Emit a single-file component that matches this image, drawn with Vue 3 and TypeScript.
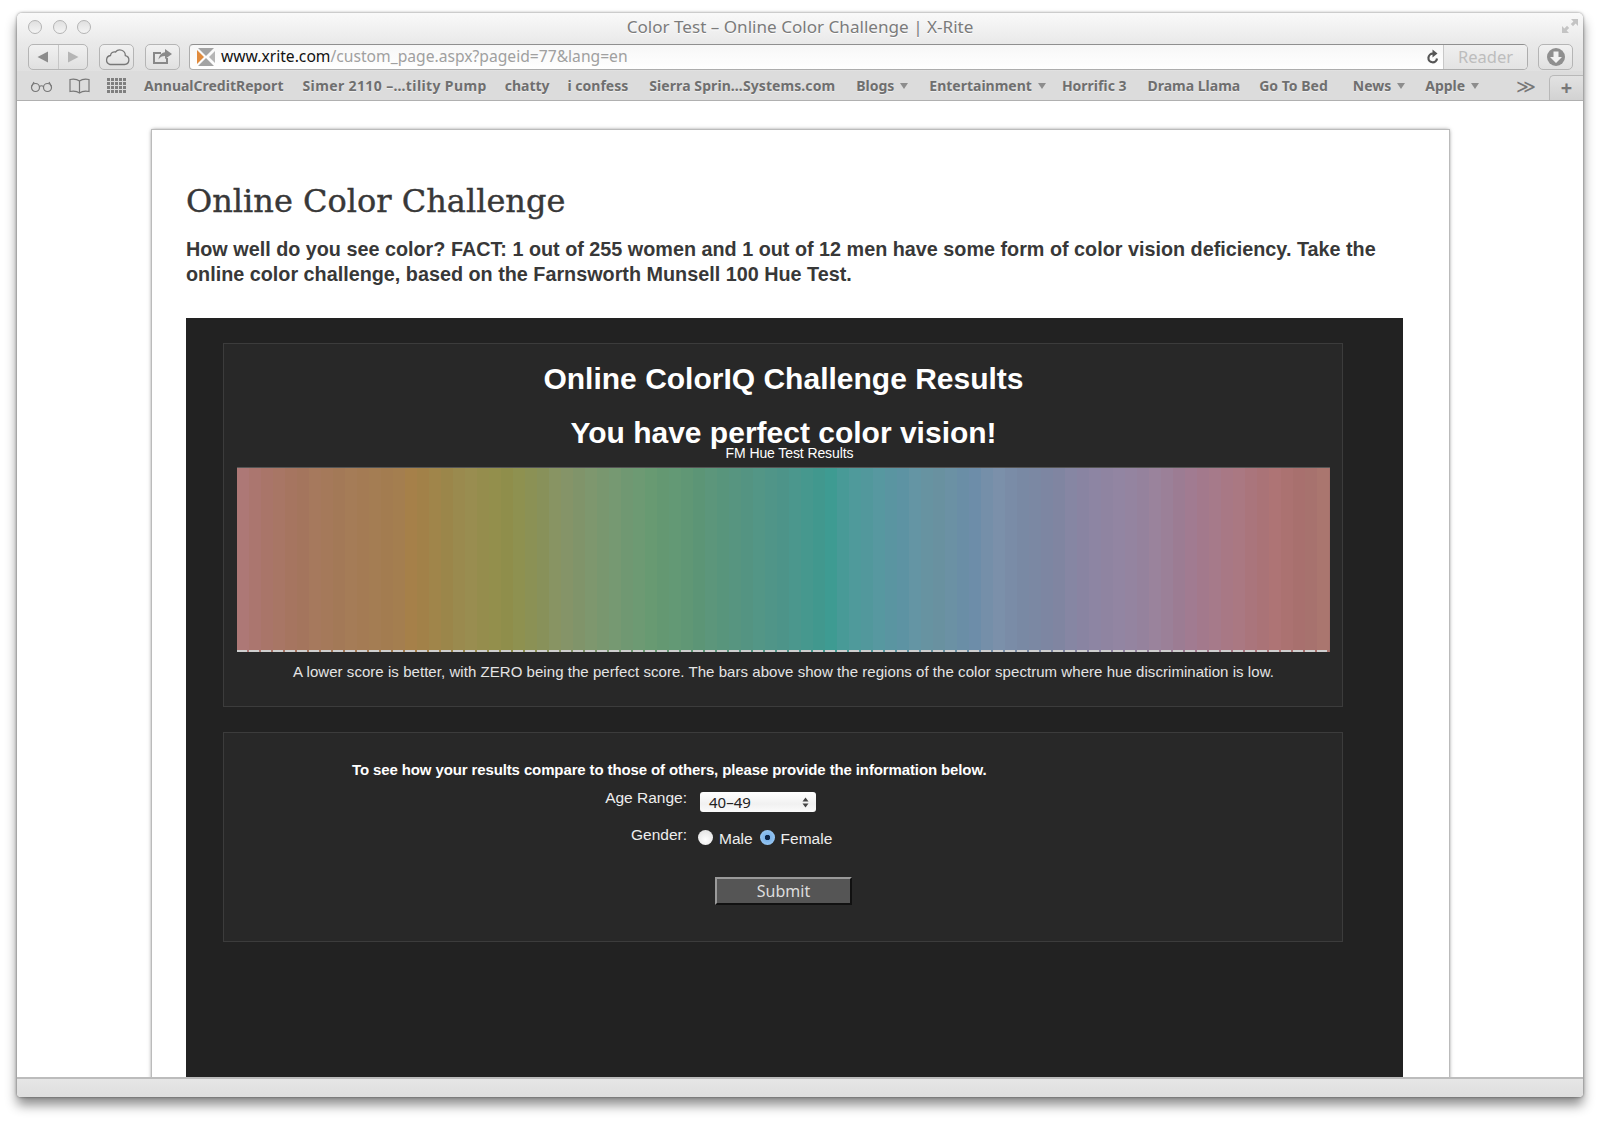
<script setup lang="ts">
const stops: [number, string][] = [
  [237, '#ae7a7c'], [250, '#ab7570'], [290, '#a67560'], [340, '#a47a58'], [400, '#a37d4e'], [412, '#a68048'],
  [450, '#9a864a'], [462, '#9b8c50'], [505, '#8f8e4a'], [522, '#8d9050'], [570, '#84946a'], [620, '#739872'],
  [650, '#689a72'], [695, '#5e9676'], [735, '#56947f'], [780, '#4f958a'], [832, '#3d9a91'], [846, '#4b9a98'],
  [905, '#5f94a4'], [934, '#6a93a0'], [973, '#6a8ca8'], [994, '#7a90aa'], [1037, '#7a87a2'], [1090, '#8b84a2'],
  [1137, '#9584a0'], [1173, '#9c7f96'], [1190, '#a07a90'], [1227, '#a87885'], [1280, '#ad7272'], [1315, '#a5716c'],
  [1330, '#ae7a72']
]
const parse = (c: string) => [1, 3, 5].map((i) => parseInt(c.slice(i, i + 2), 16))
const colorAt = (x: number, shift: number) => {
  let k = 0
  while (k < stops.length - 2 && stops[k + 1][0] < x) k++
  const [x0, c0] = stops[k]
  const [x1, c1] = stops[k + 1]
  const t = Math.min(1, Math.max(0, (x - x0) / (x1 - x0)))
  const a = parse(c0)
  const b = parse(c1)
  return `rgb(${a.map((v, i) => Math.round(v + (b[i] - v) * t + shift)).join(',')})`
}
const jitter = [0, 1, 0, 1, 0, -1, 1, 0, -1, 1]
const strips = Array.from({ length: 91 }, (_, i) => colorAt(237 + i * 12 + 6, jitter[i % 10]))

const bookmarks: { label: string; menu?: boolean; gap: number; ls?: number }[] = [
  { label: 'AnnualCreditReport', gap: 19 },
  { label: 'Simer 2110 –…tility Pump', gap: 18, ls: 0.38 },
  { label: 'chatty', gap: 18 },
  { label: 'i confess', gap: 21 },
  { label: 'Sierra Sprin…Systems.com', gap: 21, ls: 0.08 },
  { label: 'Blogs', menu: true, gap: 21 },
  { label: 'Entertainment', menu: true, gap: 16 },
  { label: 'Horrific 3', gap: 21 },
  { label: 'Drama Llama', gap: 19 },
  { label: 'Go To Bed', gap: 25 },
  { label: 'News', menu: true, gap: 20 },
  { label: 'Apple', menu: true, gap: 0 }
]
</script>

<template>
  <div class="desktop">
    <div class="window">
      <header class="titlebar">
        <div class="lights"><i></i><i></i><i></i></div>
        <div class="title">Color Test – Online Color Challenge | X-Rite</div>
        <div class="resize">
          <svg width="18" height="18" viewBox="0 0 18 18">
            <path d="M10 2h7v7l-2.400-2.400-2.600 2.600-2.200-2.200 2.600-2.600zM8 16H1V9l2.400 2.400L6 8.800l2.200 2.200-2.600 2.600z" fill="#c4c4c4" />
          </svg>
        </div>
      </header>

      <div class="toolbar">
        <div class="btn nav">
          <span class="half">
            <svg width="14" height="14" viewBox="0 0 14 14"><path d="M12 1.500v11L1.500 7z" fill="#8c8c8c" /></svg>
          </span>
          <span class="half">
            <svg width="14" height="14" viewBox="0 0 14 14"><path d="M2 1.500v11L12.500 7z" fill="#b5b5b5" /></svg>
          </span>
        </div>
        <div class="btn cloud">
          <svg width="26" height="18" viewBox="0 0 26 18">
            <path d="M6 16.500h14.500a4.500 4.500 0 0 0 .8-8.900 5.500 5.500 0 0 0-9.800-3.600A4 4 0 0 0 6.500 7.500 4.600 4.600 0 0 0 6 16.500z" fill="none" stroke="#777" stroke-width="1.300" />
          </svg>
        </div>
        <div class="btn share">
          <svg width="22" height="18" viewBox="0 0 22 18">
            <path d="M15 10v5H2V5h7" fill="none" stroke="#888" stroke-width="2" />
            <path d="M13 1l7 5-7 5V8c-3 0-5 1-6.500 3.500C7 7.500 9.500 4.500 13 4.200z" fill="#8a8a8a" />
          </svg>
        </div>
        <div class="address">
          <svg class="favicon" width="20" height="20" viewBox="0 0 20 20">
            <path d="M2 1h16l-8 8z" fill="#a3a3a3" />
            <path d="M2 19h16l-8-8z" fill="#a3a3a3" />
            <path d="M1 3v14l7-7z" fill="#e08a3c" />
            <path d="M19 4v12l-6-6z" fill="#b5b5b5" />
          </svg>
          <div class="url"><b>www.xrite.com</b><span>/custom_page.aspx?pageid=77&amp;lang=en</span></div>
          <svg class="reload" width="14" height="16" viewBox="0 0 14 16">
            <path d="M11 9.500A4.300 4.300 0 1 1 7 4.700" fill="none" stroke="#555" stroke-width="2.200" />
            <path d="M6.500 0.500l5 4-5 4z" fill="#555" />
          </svg>
          <div class="reader">Reader</div>
        </div>
        <div class="btn download">
          <svg width="20" height="20" viewBox="0 0 20 20">
            <circle cx="10" cy="10" r="9" fill="#8f8f8f" />
            <path d="M7.500 4.500h5V10H16l-6 6-6-6h3.500z" fill="#f2f2f2" />
          </svg>
        </div>
      </div>

      <nav class="bookmarks">
        <svg class="bm-icon glasses" width="25" height="14" viewBox="0 0 25 14">
          <g fill="none" stroke="#777" stroke-width="1.200">
            <circle cx="6.500" cy="8.500" r="4" /><circle cx="18.500" cy="8.500" r="4" />
            <path d="M10.500 7.500q2-1.500 4 0M2.500 7.500L5 3M22.500 7.500L20 3" />
          </g>
        </svg>
        <svg class="bm-icon book" width="23" height="16" viewBox="0 0 23 16">
          <path d="M11.500 3C9.500 1.500 5 1 2 1.500v12c3-.5 7.500 0 9.500 1.500 2-1.500 6.500-2 9.500-1.500v-12C18 1 13.500 1.500 11.500 3zm0 0v12" fill="none" stroke="#777" stroke-width="1.200" />
        </svg>
        <div class="topsites"><i v-for="n in 20" :key="n"></i></div>
        <div class="bm-list">
          <span
            v-for="b in bookmarks"
            :key="b.label"
            class="bm"
            :style="{ marginRight: b.gap + 'px', letterSpacing: (b.ls ?? 0) + 'px' }"
          >
            {{ b.label }}<i v-if="b.menu" class="caret"></i>
          </span>
        </div>
        <div class="more">≫</div>
        <div class="newtab">+</div>
      </nav>

      <main class="viewport">
        <section class="card">
          <h1>Online Color Challenge</h1>
          <p class="intro">How well do you see color? FACT: 1 out of 255 women and 1 out of 12 men have some form of color vision deficiency. Take the online color challenge, based on the Farnsworth Munsell 100 Hue Test.</p>
          <div class="panel">
            <div class="box results">
              <h2>Online ColorIQ Challenge Results</h2>
              <h3>You have perfect color vision!</h3>
              <div class="chart-title">FM Hue Test Results</div>
              <div class="spectrum">
                <i v-for="(c, i) in strips" :key="i" :style="{ background: c }"></i>
              </div>
              <p class="caption">A lower score is better, with ZERO being the perfect score. The bars above show the regions of the color spectrum where hue discrimination is low.</p>
            </div>
            <div class="box compare">
              <p class="lead">To see how your results compare to those of others, please provide the information below.</p>
              <div class="row age">
                <label>Age Range:</label>
                <div class="select">
                  <span>40–49</span>
                  <svg width="7" height="11" viewBox="0 0 7 11"><path d="M3.500 0.500L6.500 4.500H0.500zM3.500 10.500L0.500 6.500H6.500z" fill="#444" /></svg>
                </div>
              </div>
              <div class="row gender">
                <label>Gender:</label>
                <div class="radios">
                  <i class="radio"></i><span>Male</span>
                  <i class="radio on"></i><span>Female</span>
                </div>
              </div>
              <div class="actions"><button type="button" class="submit">Submit</button></div>
            </div>
          </div>
        </section>
      </main>

      <footer class="statusbar"></footer>
    </div>
  </div>
</template>

<style>
html, body { background: #fff; margin: 0; }
</style>

<style scoped>
.desktop {
  height: 1122px;
  box-sizing: border-box;
  padding: 13px 17px 0;
  overflow: hidden;
  background: #fff;
}
.window {
  width: 1566px;
  height: 1084px;
  display: flex;
  flex-direction: column;
  border-radius: 5px 5px 4px 4px;
  box-shadow: 0 0 3px rgba(0,0,0,.5), 0 8px 12px rgba(0,0,0,.45);
  font-family: "Noto Sans", sans-serif;
  background: #fff;
}
.titlebar {
  height: 31px;
  flex: none;
  display: grid;
  grid-template-columns: 1fr auto 1fr;
  align-items: center;
  padding: 0 11px 4px;
  border-radius: 5px 5px 0 0;
  background: linear-gradient(#f9f9f9, #e9e9e9);
  box-sizing: border-box;
}
.lights { display: flex; gap: 10.500px; }
.lights i {
  width: 14px; height: 14px; border-radius: 50%;
  box-sizing: border-box;
  border: 1px solid #b4b4b4;
  background: linear-gradient(#e0e0e0, #f4f4f4);
}
.title { font-size: 17.100px; color: #7b7b7b; line-height: 24px; text-shadow: 0 1px 0 #fff; }
.resize { justify-self: end; display: flex; margin: -2px -7px 0 0; }
.toolbar {
  height: 27px;
  flex: none;
  display: flex;
  align-items: flex-start;
  padding: 0 10px 0 11px;
  background: linear-gradient(#e9e9e9, #e0e0e0);
  box-sizing: border-box;
}
.btn {
  height: 26px;
  box-sizing: border-box;
  border: 1px solid #b5b5b5;
  border-radius: 5px;
  background: linear-gradient(#f1f1f1, #e0e0e0);
  display: flex;
  align-items: center;
  justify-content: center;
}
.nav { width: 60px; }
.half { flex: 1; display: flex; justify-content: center; align-items: center; height: 100%; }
.half + .half { border-left: 1px solid #c6c6c6; }
.cloud { width: 35px; margin-left: 11px; }
.share { width: 35px; margin-left: 11px; }
.address {
  width: 1339px;
  height: 26px;
  margin-left: 9px;
  box-sizing: border-box;
  border: 1px solid #adadad;
  border-top-color: #8f8f8f;
  border-radius: 4px 5px 5px 4px;
  background: linear-gradient(#f7f7f7, #fff);
  display: flex;
  align-items: center;
  padding-left: 6px;
  overflow: hidden;
}
.favicon { flex: none; }
.url { margin-left: 5px; font-size: 15.650px; line-height: 23px; white-space: nowrap; color: #a0a0a0; flex: 1; margin-top: -1px; }
.url b { font-weight: 400; color: #111; }
.reload { margin-right: 3px; flex: none; }
.reader {
  width: 84px;
  height: 100%;
  flex: none;
  box-sizing: border-box;
  border-left: 1px solid #c8c8c8;
  background: linear-gradient(#efefef, #e3e3e3);
  color: #bdbdbd;
  font-size: 16.500px;
  line-height: 23px;
  text-align: center;
}
.download { width: 35px; margin-left: 10px; }
.bookmarks {
  height: 30px;
  flex: none;
  box-sizing: border-box;
  display: flex;
  align-items: center;
  padding-left: 12px;
  background: #dcdcdc;
  border-bottom: 1px solid #b0b0b0;
}
.bm-icon { flex: none; }
.book { margin-left: 14px; }
.topsites {
  display: grid;
  grid-template-columns: repeat(5, 3px);
  grid-auto-rows: 3px;
  gap: 1px;
  margin-left: 16px;
}
.topsites i { background: #7f7f7f; }
.bm-list {
  display: flex;
  align-items: center;
  margin-left: 18px;
  white-space: nowrap;
  flex: 1;
}
.bm {
  font-size: 14px;
  font-weight: 700;
  line-height: 20px;
  color: #6f6f6f;
  text-shadow: 0 1px 0 #eee;
  display: flex;
  align-items: center;
}
.caret {
  margin-left: 6px;
  width: 0; height: 0;
  border: 4.500px solid transparent;
  border-top: 6px solid #8d8d8d;
  border-bottom: 0;
}
.more { font-size: 19px; color: #777; line-height: 20px; margin-right: 13px; }
.newtab {
  width: 34px;
  height: 25px;
  align-self: flex-end;
  box-sizing: border-box;
  border: 1px solid #b8b8b8;
  border-bottom: 0;
  border-right: 0;
  border-radius: 5px 0 0 0;
  background: linear-gradient(#e2e2e2, #d2d2d2);
  color: #777;
  font-size: 20px;
  font-weight: 700;
  line-height: 24px;
  text-align: center;
}
.viewport {
  flex: 1;
  min-height: 0;
  overflow: hidden;
  padding: 29px 0 4px 135px;
  background: #fff;
  border-bottom: 2px solid #bcbcbc;
}
.card {
  width: 1297px;
  height: 1000px;
  box-sizing: border-box;
  padding: 47px 46px 0 34px;
  background: #fff;
  box-shadow: 0 0 0 1px #bbb, 0 0 4px rgba(0,0,0,.6);
}
h1 {
  margin: 0;
  font-family: "DejaVu Serif", serif;
  font-weight: 400;
  font-size: 32px;
  line-height: 48px;
  color: #383838;
  -webkit-text-stroke: .4px #383838;
}
.intro {
  margin: 12px 0 0;
  font-family: "Liberation Sans", sans-serif;
  font-weight: 700;
  font-size: 19.800px;
  line-height: 24.500px;
  color: #383838;
}
.panel {
  margin-top: 32px;
  height: 900px;
  box-sizing: border-box;
  padding: 25px 0 0 37px;
  background: #222;
  font-family: "Liberation Sans", sans-serif;
  color: #fff;
}
.box {
  width: 1120px;
  box-sizing: border-box;
  border: 1px solid #3c3c3c;
  background: #282828;
}
.results { height: 364px; padding: 18px 12px 0 13px; text-align: center; }
h2 { margin: 0; font-size: 30px; line-height: 34px; font-weight: 700; }
h3 { margin: 20px 0 0; font-size: 30px; line-height: 34px; font-weight: 700; }
.chart-title { margin-top: -5px; padding-left: 12px; font-size: 14px; line-height: 16px; letter-spacing: -.1px; }
.spectrum {
  margin-top: 6px;
  height: 185px;
  display: flex;
  box-sizing: border-box;
  border-top: 1px solid #555;
  overflow: hidden;
  background: #a5716c;
}
.spectrum i { flex: none; width: 12px; display: flex; align-items: flex-end; }
.spectrum i::after { content: ""; width: 9.500px; height: 2px; background: #cfcfcf; }
.caption { margin: 10px 0 0; font-size: 15px; line-height: 20px; color: #e4e4e4; letter-spacing: .05px; }
.compare { height: 210px; margin-top: 25px; padding: 27px 0 0 128px; }
.lead { margin: 0; font-size: 15px; line-height: 20px; font-weight: 700; letter-spacing: -.12px; }
.row { display: grid; grid-template-columns: 335px auto; column-gap: 13px; justify-content: start; }
.row label { text-align: right; font-size: 15.500px; line-height: 20px; color: #eee; }
.age { margin-top: 8px; }
.select {
  width: 116px;
  height: 20px;
  margin-top: 4px;
  box-sizing: border-box;
  border-radius: 3px;
  background: linear-gradient(#fff, #f1f1f1 60%, #fbfbfb);
  color: #222;
  display: flex;
  align-items: center;
  justify-content: space-between;
  padding: 0 7px 0 9px;
  font-family: "Noto Sans", sans-serif;
  font-size: 15px;
}
.gender { margin-top: 13px; }
.radios { display: flex; align-items: center; height: 20px; margin-top: 2px; margin-left: -2px; font-size: 15.500px; color: #eee; }
.radio {
  width: 15px; height: 15px; border-radius: 50%;
  box-sizing: border-box;
  background: radial-gradient(circle at 50% 65%, #fff, #ddd);
  margin-right: 6px;
  flex: none;
}
.radios span { margin: 4px 7px 0 0; }
.radio.on {
  background: radial-gradient(circle, #0b2447 0 2.500px, #7db4ea 3px, #a7d2f7 100%);
}
.actions { margin-top: 30px; margin-left: 363px; }
.submit {
  display: block;
  width: 137px;
  height: 28px;
  padding: 0;
  border: 2px solid;
  border-color: #9a9a9a #111 #111 #9a9a9a;
  background: #555;
  color: #ddd;
  font-family: "Noto Sans", sans-serif;
  font-size: 16px;
  line-height: 24px;
}
.statusbar {
  height: 18px;
  flex: none;
  border-radius: 0 0 4px 4px;
  background: linear-gradient(#e6e6e6, #dedede);
}
</style>
